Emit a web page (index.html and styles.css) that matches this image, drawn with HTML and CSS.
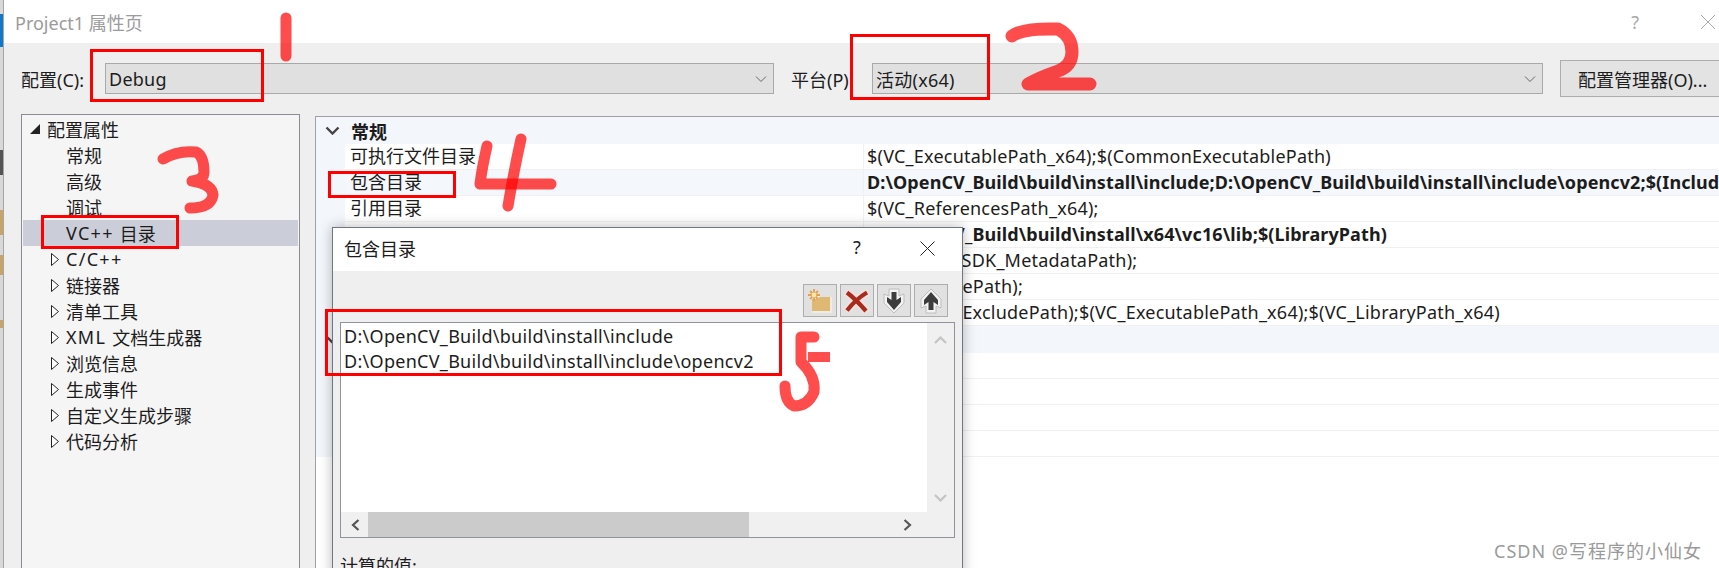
FILE: index.html
```html
<!DOCTYPE html>
<html lang="zh-CN">
<head>
<meta charset="utf-8">
<title>Project1 属性页</title>
<link rel="stylesheet" href="styles.css">
</head>
<body>
<div class="page">
  <div class="strip"></div>
  <div class="window">
    <header class="titlebar">
      <span class="title">Project1 属性页</span>
      <span class="help">?</span>
      <svg class="close" width="16" height="16" viewBox="0 0 16 16"><path d="M1 1L15 15M15 1L1 15" stroke="#a8a8a8" stroke-width="1" fill="none"/></svg>
    </header>
    <div class="configbar">
      <span class="label label-config">配置(C):</span>
      <div class="combo combo-config"><span>Debug</span><svg width="12" height="6" viewBox="0 0 12 6"><path d="M1 .5L6 5.5L11 .5" stroke="#666" fill="none"/></svg></div>
      <span class="label label-platform">平台(P)</span>
      <div class="combo combo-platform"><span>活动(x64)</span><svg width="12" height="6" viewBox="0 0 12 6"><path d="M1 .5L6 5.5L11 .5" stroke="#666" fill="none"/></svg></div>
      <button class="manager">配置管理器(O)...</button>
    </div>
    <div class="content">
      <nav class="tree">
        <div class="node node-root"><svg class="tri" width="10" height="10" viewBox="0 0 10 10"><path d="M0 10H10V0Z" fill="#222"/></svg>配置属性</div>
        <div class="node node-leaf">常规</div>
        <div class="node node-leaf">高级</div>
        <div class="node node-leaf">调试</div>
        <div class="node node-leaf node-selected"><span class="latin">VC++&nbsp;</span>目录</div>
        <div class="node node-branch"><svg class="tri" width="8" height="13" viewBox="0 0 8 13"><path d="M.5 .5L7.5 6.5L.5 12.5Z" fill="#fff" stroke="#222"/></svg><span class="latin">C/C++</span></div>
        <div class="node node-branch"><svg class="tri" width="8" height="13" viewBox="0 0 8 13"><path d="M.5 .5L7.5 6.5L.5 12.5Z" fill="#fff" stroke="#222"/></svg>链接器</div>
        <div class="node node-branch"><svg class="tri" width="8" height="13" viewBox="0 0 8 13"><path d="M.5 .5L7.5 6.5L.5 12.5Z" fill="#fff" stroke="#222"/></svg>清单工具</div>
        <div class="node node-branch"><svg class="tri" width="8" height="13" viewBox="0 0 8 13"><path d="M.5 .5L7.5 6.5L.5 12.5Z" fill="#fff" stroke="#222"/></svg><span class="latin">XML&nbsp;</span>文档生成器</div>
        <div class="node node-branch"><svg class="tri" width="8" height="13" viewBox="0 0 8 13"><path d="M.5 .5L7.5 6.5L.5 12.5Z" fill="#fff" stroke="#222"/></svg>浏览信息</div>
        <div class="node node-branch"><svg class="tri" width="8" height="13" viewBox="0 0 8 13"><path d="M.5 .5L7.5 6.5L.5 12.5Z" fill="#fff" stroke="#222"/></svg>生成事件</div>
        <div class="node node-branch"><svg class="tri" width="8" height="13" viewBox="0 0 8 13"><path d="M.5 .5L7.5 6.5L.5 12.5Z" fill="#fff" stroke="#222"/></svg>自定义生成步骤</div>
        <div class="node node-branch"><svg class="tri" width="8" height="13" viewBox="0 0 8 13"><path d="M.5 .5L7.5 6.5L.5 12.5Z" fill="#fff" stroke="#222"/></svg>代码分析</div>
      </nav>
      <section class="props">
        <div class="section"><svg class="chev" width="15" height="9" viewBox="0 0 15 9"><path d="M1.5 1.5L7.5 7.5L13.5 1.5" stroke="#444" stroke-width="2.4" fill="none"/></svg><b>常规</b></div>
        <div class="row"><div class="name">可执行文件目录</div><div class="value">$(VC_ExecutablePath_x64);$(CommonExecutablePath)</div></div>
        <div class="row row-active"><div class="name">包含目录</div><div class="value value-bold">D:\OpenCV_Build\build\install\include;D:\OpenCV_Build\build\install\include\opencv2;$(IncludePath)</div></div>
        <div class="row"><div class="name">引用目录</div><div class="value">$(VC_ReferencesPath_x64);</div></div>
        <div class="row"><div class="name"></div><div class="value value-bold">D:\OpenCV_Build\build\install\x64\vc16\lib;$(LibraryPath)</div></div>
        <div class="row"><div class="name"></div><div class="value">$(WindowsSDK_MetadataPath);</div></div>
        <div class="row"><div class="name"></div><div class="value">$(VC_SourcePath);</div></div>
        <div class="row"><div class="name"></div><div class="value">$(CommonExcludePath);$(VC_ExecutablePath_x64);$(VC_LibraryPath_x64)</div></div>
        <div class="section"><svg class="chev" width="15" height="9" viewBox="0 0 15 9"><path d="M1.5 1.5L7.5 7.5L13.5 1.5" stroke="#444" stroke-width="2.4" fill="none"/></svg></div>
        <div class="row"><div class="name"></div><div class="value"></div></div>
        <div class="row"><div class="name"></div><div class="value"></div></div>
        <div class="row"><div class="name"></div><div class="value"></div></div>
        <div class="row"><div class="name"></div><div class="value"></div></div>
      </section>
    </div>
  </div>

  <div class="dialog">
    <header class="dialog-title">
      <span class="dialog-name">包含目录</span>
      <span class="dialog-help">?</span>
      <svg class="dialog-close" width="15" height="15" viewBox="0 0 15 15"><path d="M.5 .5L14.5 14.5M14.5 .5L.5 14.5" stroke="#222" fill="none"/></svg>
    </header>
    <div class="dialog-body">
      <div class="toolbar">
        <button class="tool"><svg width="32" height="31" viewBox="0 0 32 31">
          <path d="M7 11H14L16 13H27V27H9V14Z" fill="#fff" opacity=".75" stroke="#f4f0e4" stroke-width="2"/>
          <path d="M8 14H14L15.5 12H26V26H8Z" fill="#dfb873"/>
          <path d="M10 4V16M4 10H16M6 6L14 14M14 6L6 14" stroke="#e0a04e" stroke-width="1.8"/>
          <circle cx="10" cy="10" r="2.4" fill="#fbe6a8"/>
        </svg></button>
        <button class="tool"><svg width="32" height="31" viewBox="0 0 32 31">
          <path d="M5 7Q15 14 26 27M27 7Q15 14 5 26" stroke="#efe2de" stroke-width="8" fill="none"/>
          <path d="M6 7.5Q15 14.5 25 26M26 7.5Q15 14 6 25.5" stroke="#aa2a1c" stroke-width="4.2" fill="none"/>
        </svg></button>
        <button class="tool"><svg width="32" height="31" viewBox="0 0 32 31">
          <path d="M11 4H21V11L26 9V18L16 28L6 18V9L11 11Z" fill="#f3f3f3" stroke="#bdbdbd"/>
          <path d="M13.5 7H18.5V15L23 12V17L16 25L9 17V12L13.5 15Z" fill="#3d3d3d"/>
        </svg></button>
        <button class="tool"><svg width="32" height="31" viewBox="0 0 32 31">
          <path d="M11 28H21V21L26 23V14L16 4L6 14V23L11 21Z" fill="#f3f3f3" stroke="#bdbdbd"/>
          <path d="M13.5 25H18.5V17L23 20V15L16 7L9 15V20L13.5 17Z" fill="#3d3d3d"/>
        </svg></button>
      </div>
      <div class="listbox">
        <div class="list-main">
          <div class="list-lines">
            <div>D:\OpenCV_Build\build\install\include</div>
            <div>D:\OpenCV_Build\build\install\include\opencv2</div>
          </div>
          <div class="vscroll">
            <svg width="13" height="8" viewBox="0 0 13 8"><path d="M1 7L6.5 1.5L12 7" stroke="#c4c4c4" stroke-width="2.2" fill="none"/></svg>
            <svg width="13" height="8" viewBox="0 0 13 8"><path d="M1 1L6.5 6.5L12 1" stroke="#c4c4c4" stroke-width="2.2" fill="none"/></svg>
          </div>
        </div>
        <div class="hscroll">
          <svg class="harrow" width="9" height="12" viewBox="0 0 9 12"><path d="M7.5 1L2 6L7.5 11" stroke="#555" stroke-width="2.2" fill="none"/></svg>
          <div class="thumb"></div>
          <svg class="harrow harrow-right" width="9" height="12" viewBox="0 0 9 12"><path d="M1.5 1L7 6L1.5 11" stroke="#555" stroke-width="2.2" fill="none"/></svg>
        </div>
      </div>
      <div class="computed">计算的值:</div>
    </div>
  </div>

  <svg class="marks" width="1719" height="568" viewBox="0 0 1719 568" fill="none">
    <g class="ink">
      <path d="M286 18V56"/>
      <path d="M1012 36Q1022 28 1058 29Q1072 36 1072 52Q1072 66 1058 71Q1038 78 1028 84H1090" class="ink-wide"/>
      <path d="M163 159Q178 150 196 152Q204 156 204 172Q204 180 192 181Q212 184 213 195Q211 208 190 208"/>
      <path d="M487 146Q482 168 480 184H551"/>
      <path d="M521 139Q514 170 508 206"/>
      <path d="M814 337H801V362Q816 376 814 392Q808 406 794 406Q785 402 785 386"/>
      <path d="M808 357H830" class="ink-thin"/>
    </g>
    <g class="boxes">
      <rect x="91.5" y="50.5" width="171" height="50"/>
      <rect x="851.5" y="35.5" width="137" height="63"/>
      <rect x="42.5" y="216.5" width="135" height="31"/>
      <rect x="329.5" y="172.5" width="125" height="24"/>
      <rect x="326.5" y="310.5" width="454" height="64"/>
    </g>
  </svg>

  <div class="watermark">CSDN @写程序的小仙女</div>
</div>
</body>
</html>
```
FILE: styles.css
```css
* { box-sizing: border-box; }
html, body { margin: 0; padding: 0; background: #fff; }
body {
  font-family: "Noto Sans", "Noto Sans CJK SC", sans-serif;
  font-size: 18px;
  color: #1c1c1c;
}
.page {
  position: relative;
  display: flex;
  width: 1719px;
  height: 568px;
  overflow: hidden;
}
.strip {
  flex: 0 0 3px;
  background: linear-gradient(#d8d8d8 0 14px, #0f78c8 14px 47px, #d8d8d8 47px 150px, #555 150px 175px, #d8d8d8 175px 210px, #c8a468 210px 235px, #d8d8d8 235px 255px, #c8a468 255px 275px, #d8d8d8 275px 320px, #c8a468 320px 328px, #d8d8d8 328px);
}
.window {
  flex: 1;
  min-width: 0;
  display: flex;
  flex-direction: column;
  background: #efefef;
  border-left: 1px solid #a6a6a6;
}
.titlebar {
  display: flex;
  align-items: center;
  flex: 0 0 43px;
  background: #fff;
  padding-left: 11px;
}
.title { color: #9b9b9b; }
.help { margin-left: auto; color: #a8a8a8; }
.close { margin: 0 3px 0 61px; }

.configbar {
  display: flex;
  align-items: center;
  flex: 0 0 71px;
  padding-left: 17px;
  white-space: nowrap;
}
.configbar > * { flex: none; }
.label-config { width: 84px; }
.label-platform { width: 81px; margin-left: 17px; }
.combo {
  display: flex;
  align-items: center;
  justify-content: space-between;
  height: 31px;
  padding: 0 6px 0 3px;
  background: #e0e0e0;
  border: 1px solid #a9a9a9;
  letter-spacing: .25px;
}
.combo-config { width: 669px; }
.combo-platform { width: 671px; }
.manager {
  width: 175px;
  height: 37px;
  margin-left: 17px;
  padding: 0 0 0 17px;
  text-align: left;
  white-space: nowrap;
  font: inherit;
  color: inherit;
  background: #e3e3e3;
  border: 1px solid #adadad;
}

.content {
  flex: 1;
  min-height: 0;
  display: flex;
  gap: 15px;
  padding-left: 17px;
}
.tree {
  flex: 0 0 279px;
  background: #f5f5f5;
  border: 1px solid #8b8b93;
  border-bottom: 0;
  padding-top: 1px;
}
.node {
  position: relative;
  display: flex;
  align-items: center;
  height: 26px;
  margin: 0 1px;
  white-space: pre;
}
.node-root { padding-left: 24px; }
.node-leaf, .node-branch { padding-left: 43px; }
.node-selected { background: #cbced9; }
.latin { letter-spacing: 1.3px; }
.tri { position: absolute; left: 28px; top: 7px; }
.node-root .tri { left: 7px; top: 8px; }

.props {
  flex: 1;
  min-width: 0;
  margin-top: 2px;
  background: #fff;
  border: 1px solid #a0a0a8;
  border-width: 1px 0 0 1px;
  overflow: hidden;
}
.section {
  position: relative;
  display: flex;
  align-items: center;
  height: 27px;
  padding-left: 35px;
  background: #f3f6fb;
}
.chev { position: absolute; left: 9px; top: 9px; }
.row {
  display: flex;
  height: 26px;
  background: #f3f6fb;
  white-space: nowrap;
  line-height: 25px;
}
.name {
  flex: 0 0 518px;
  margin-left: 29px;
  padding-left: 5px;
  background: #fff;
  border-bottom: 1px solid #f1f1f1;
}
.value {
  flex: 1;
  min-width: 0;
  padding-left: 3px;
  background: #fff;
  border-left: 1px solid #f1f1f1;
  border-bottom: 1px solid #f1f1f1;
  overflow: hidden;
  letter-spacing: .22px;
}
.row-active .name, .row-active .value { background: #f4f7fb; }
.value-bold { font-weight: 700; letter-spacing: .1px; }

.dialog {
  position: absolute;
  left: 332px;
  top: 227px;
  width: 631px;
  height: 400px;
  background: #efefef;
  border: 1px solid #6e7782;
  box-shadow: 0 0 12px rgba(0, 0, 0, .28);
}
.dialog-title {
  position: relative;
  display: flex;
  align-items: center;
  height: 43px;
  padding: 0 0 4px 11px;
  background: #fff;
}
.dialog-help { position: absolute; left: 520px; top: 7px; }
.dialog-close { position: absolute; left: 587px; top: 13px; }
.dialog-body { padding: 13px 7px 0 7px; }
.toolbar {
  display: flex;
  justify-content: flex-end;
  gap: 3px;
  height: 33px;
  padding-right: 7px;
}
.tool {
  width: 34px;
  height: 33px;
  padding: 0;
  background: #e1e1e1;
  border: 1px solid #adadad;
}
.tool svg { display: block; }
.listbox {
  display: flex;
  flex-direction: column;
  height: 216px;
  margin-top: 5px;
  background: #fff;
  border: 1px solid #8d949c;
}
.list-main {
  flex: 1;
  min-height: 0;
  display: flex;
}
.list-lines {
  flex: 1;
  padding: 1px 0 0 3px;
  line-height: 25px;
  white-space: nowrap;
  letter-spacing: .29px;
}
.vscroll {
  flex: 0 0 27px;
  display: flex;
  flex-direction: column;
  justify-content: space-between;
  align-items: center;
  padding: 13px 0 10px;
  background: #f0f0f0;
}
.hscroll {
  display: flex;
  align-items: center;
  flex: 0 0 25px;
  background: #f0f0f0;
}
.harrow { margin-left: 10px; }
.thumb {
  width: 381px;
  height: 100%;
  margin-left: 8px;
  background: #cbcbcb;
}
.harrow-right { margin-left: 154px; }
.computed { margin-top: 14px; }

.marks { position: absolute; left: 0; top: 0; pointer-events: none; }
.ink path {
  stroke: #ff0000;
  stroke-opacity: .7;
  stroke-width: 11;
  stroke-linecap: round;
  stroke-linejoin: round;
}
.ink .ink-wide { stroke-width: 13; }
.ink .ink-thin { stroke-width: 10; stroke-linecap: butt; }
.boxes rect { fill: none; stroke: #f00; stroke-width: 3; }

.watermark {
  position: absolute;
  right: 17px;
  top: 537px;
  color: #9a9a9a;
  white-space: nowrap;
  letter-spacing: 1px;
}
```
